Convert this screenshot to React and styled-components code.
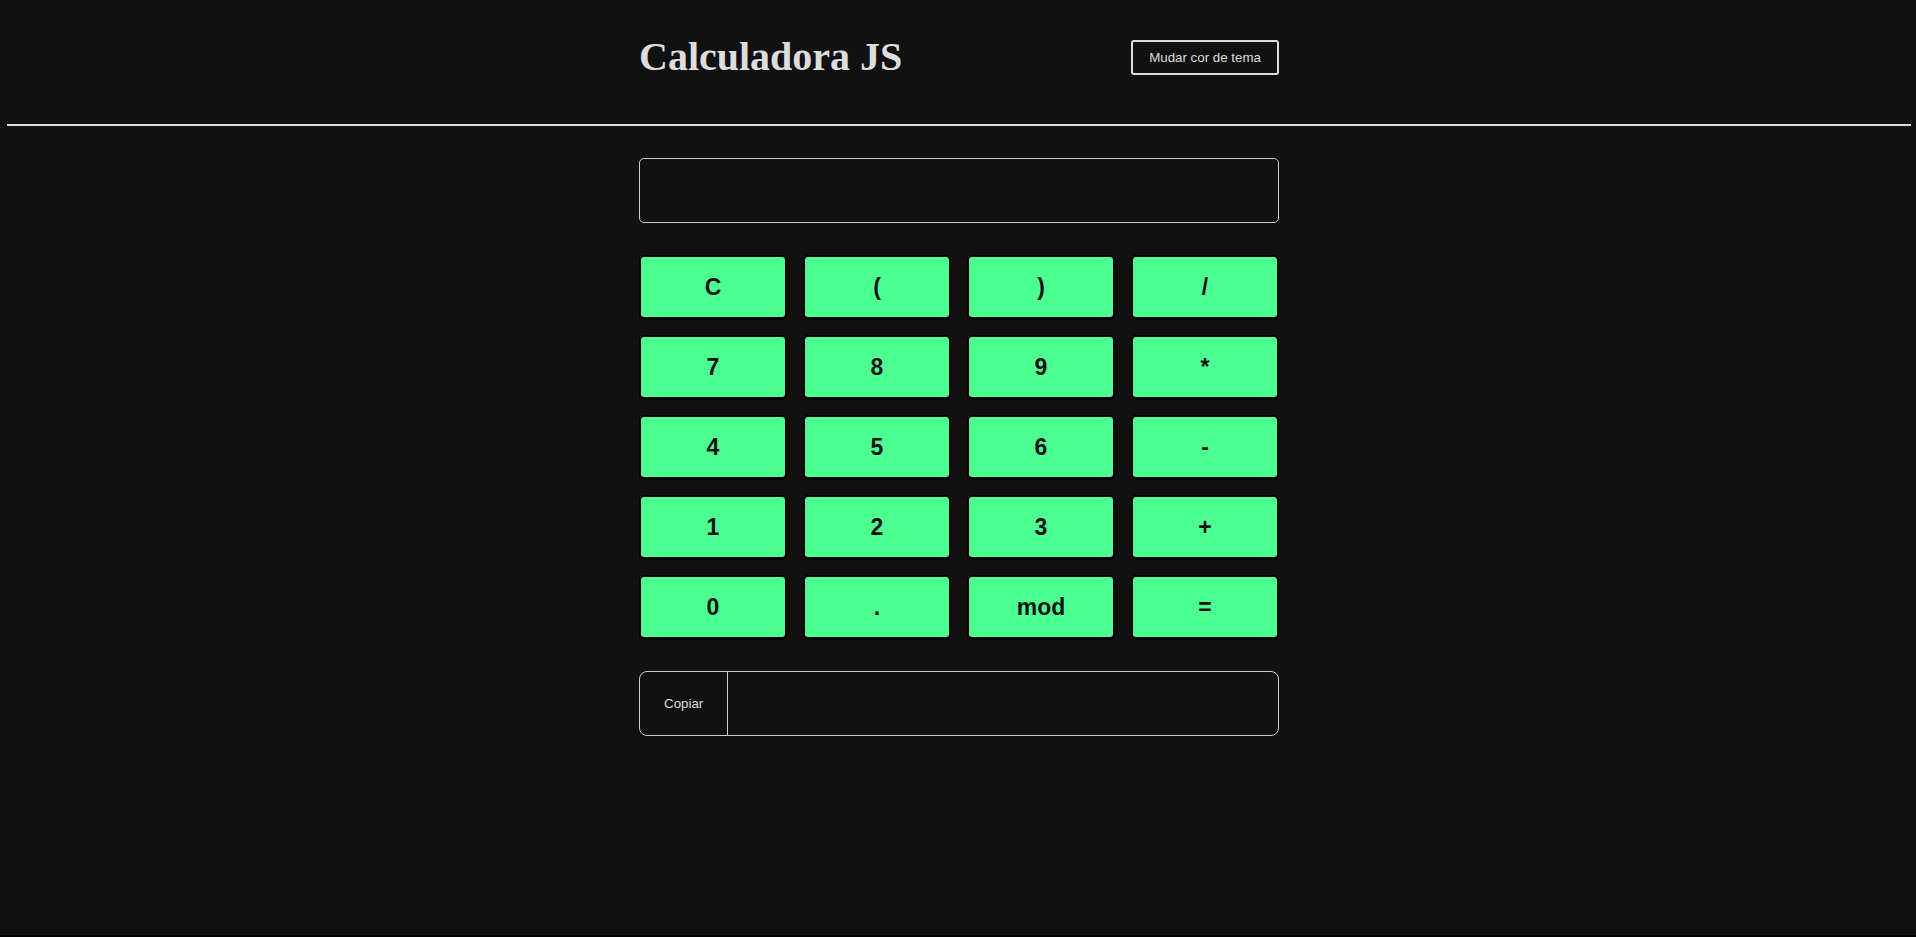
import React from "react";
import styled, { createGlobalStyle } from "styled-components";

const GlobalStyle = createGlobalStyle`
  html {
    background: #000;
  }
  body {
    margin: 0;
    padding-left: 2px;
    background: #111111;
    min-height: 935px;
    color: #dddddd;
    font-family: "Liberation Sans", Arial, sans-serif;
  }
  * { box-sizing: border-box; }
`;

const Header = styled.header`
  width: 640px;
  margin: 0 auto;
  padding: 35px 0 45px;
  display: flex;
  align-items: center;
  justify-content: space-between;
`;

const Title = styled.h1`
  margin: 0;
  font-family: "Liberation Serif", "Times New Roman", serif;
  font-weight: bold;
  font-size: 40px;
  line-height: 44px;
  color: #dddddd;
`;

const ThemeButton = styled.button`
  background: transparent;
  color: #dddddd;
  border: 2px solid #dddddd;
  border-radius: 3px;
  padding: 0 16px;
  height: 35px;
  font-family: "Liberation Sans", Arial, sans-serif;
  font-size: 13.333px;
  cursor: pointer;
`;

const Rule = styled.div`
  height: 2px;
  background: #dddddd;
  margin: 0 5px 0 5px;
`;

const Main = styled.main`
  width: 640px;
  margin: 32px auto 0;
  display: flex;
  flex-direction: column;
`;

const Display = styled.input`
  height: 65px;
  width: 100%;
  background: transparent;
  border: 1px solid #cccccc;
  border-radius: 5px;
  color: #dddddd;
  font-family: "Liberation Sans", Arial, sans-serif;
  font-size: 24px;
  padding: 0 16px;
  outline: none;
`;

const Keypad = styled.div`
  margin-top: 32px;
  display: grid;
  grid-template-columns: repeat(4, 148px);
  grid-auto-rows: 64px;
  gap: 16px;
`;

const Key = styled.button`
  background: #4dff91;
  border: 2px solid #000;
  border-radius: 5px;
  box-shadow: 0 1px 0 #000;
  color: #111111;
  font-family: "Liberation Sans", Arial, sans-serif;
  font-weight: bold;
  font-size: 23px;
  cursor: pointer;
  padding: 0;
`;

const CopyBar = styled.div`
  margin-top: 32px;
  height: 65px;
  display: flex;
  border: 1px solid #cccccc;
  border-radius: 8px;
  overflow: hidden;
`;

const CopyButton = styled.button`
  background: transparent;
  border: none;
  border-right: 1px solid #cccccc;
  color: #dddddd;
  font-family: "Liberation Sans", Arial, sans-serif;
  font-size: 13.333px;
  padding: 0 24px;
  cursor: pointer;
`;

const Result = styled.input`
  flex: 1;
  background: transparent;
  border: none;
  outline: none;
  color: #dddddd;
  font-family: "Liberation Sans", Arial, sans-serif;
  font-size: 16px;
  padding: 0 16px;
`;

const keys = ["C", "(", ")", "/", "7", "8", "9", "*", "4", "5", "6", "-", "1", "2", "3", "+", "0", ".", "mod", "="];

export default function App() {
  return (
    <>
      <GlobalStyle />
      <Header>
        <Title>Calculadora JS</Title>
        <ThemeButton>Mudar cor de tema</ThemeButton>
      </Header>
      <Rule />
      <Main>
        <Display readOnly />
        <Keypad>
          {keys.map((k) => (
            <Key key={k}>{k}</Key>
          ))}
        </Keypad>
        <CopyBar>
          <CopyButton>Copiar</CopyButton>
          <Result readOnly />
        </CopyBar>
      </Main>
    </>
  );
}
